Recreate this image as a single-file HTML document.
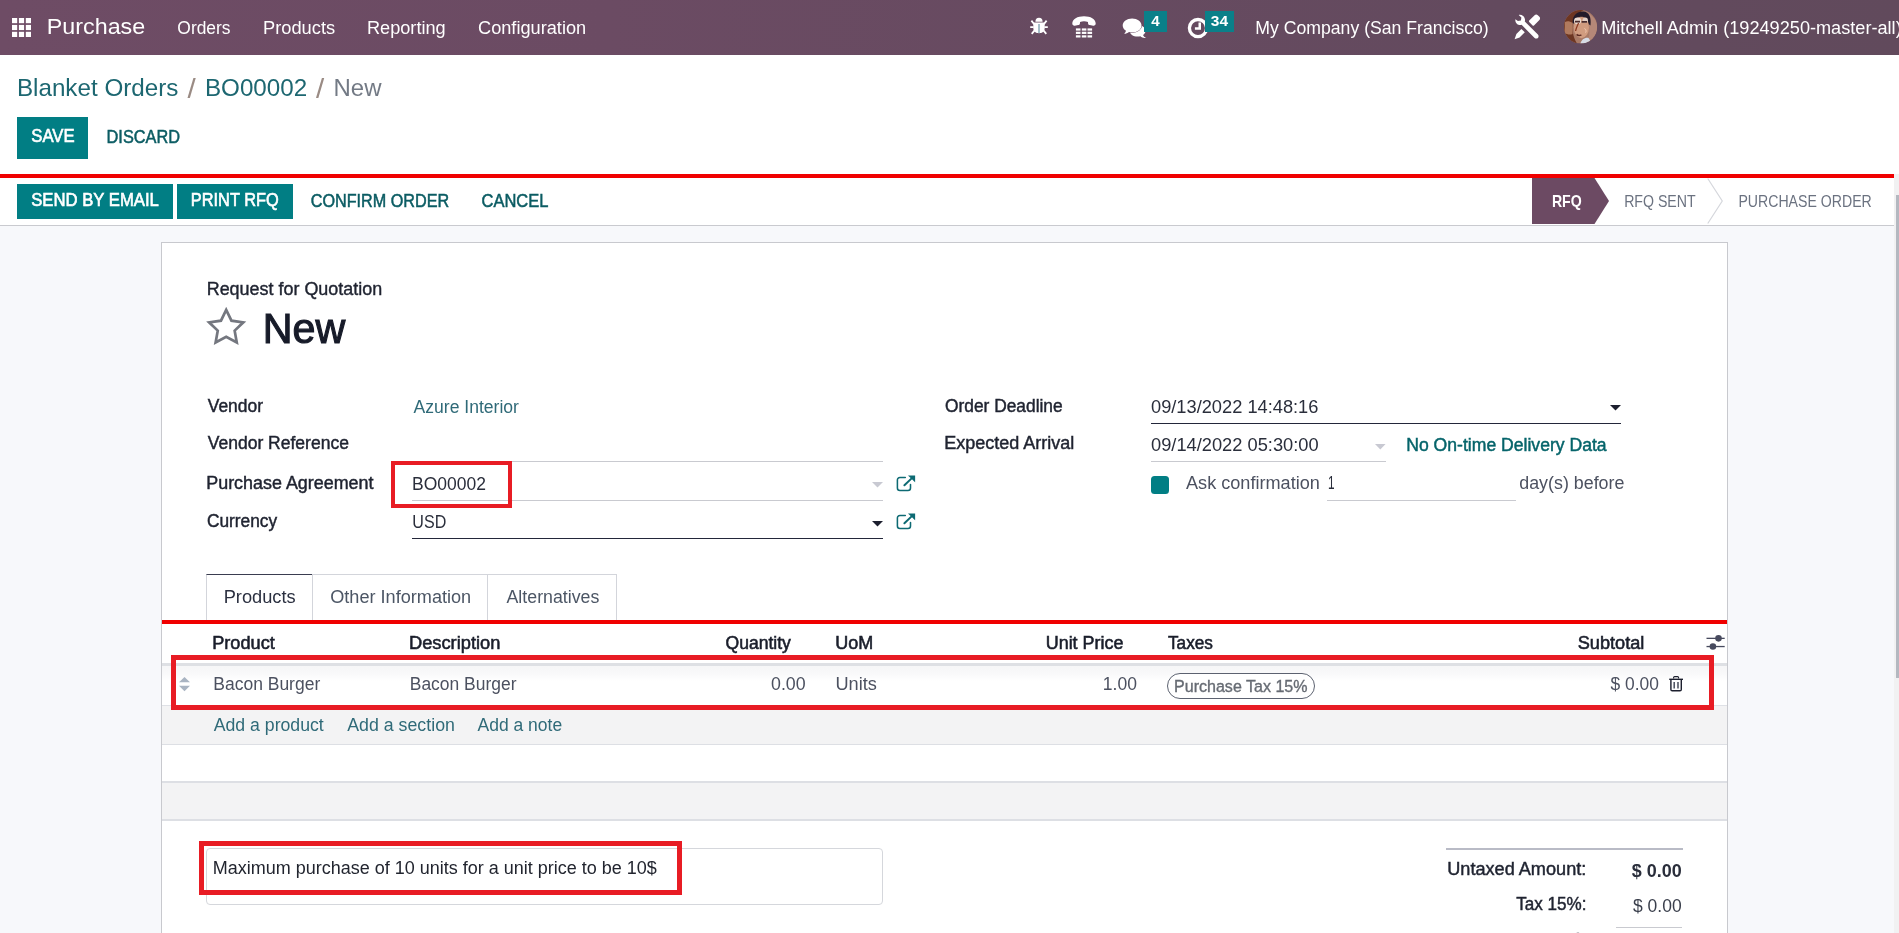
<!DOCTYPE html><html lang="en"><head><meta charset="utf-8"><title>Odoo - New Request for Quotation</title><style>
*{box-sizing:border-box;margin:0;padding:0}
html,body{width:1899px;height:933px;overflow:hidden;background:#f7f8fb}
body{position:relative;font-family:"Liberation Sans",sans-serif;font-size:17.5px;color:#1f2330}
.t{position:absolute;white-space:nowrap;transform-origin:0 50%;display:block;margin:0;padding:0;border:0;background:none;font-family:inherit;font-weight:400;text-decoration:none;text-align:left;letter-spacing:0;appearance:none;-webkit-appearance:none;cursor:default}
.a{position:absolute;display:block}
.sec{position:static;display:block}
.layer{position:absolute;left:0;top:0;width:1899px;height:933px;will-change:transform;overflow:hidden}
svg{position:absolute;overflow:visible}
#nav{position:absolute;left:0;top:0;width:1899px;height:54.5px;background:linear-gradient(90deg,#6e4c65 0%,#6b4b63 32%,#634a5e 79%,#614a5c 100%);overflow:hidden}
#cp{position:absolute;left:0;top:54.5px;width:1899px;height:119.5px;background:#fff}
#sb{position:absolute;left:0;top:174px;width:1894px;height:52px;background:#fff;border-bottom:1px solid #c9cacf}
#sheet{position:absolute;left:161px;top:242px;width:1567px;height:720px;background:#fff;border:1px solid #c8c9ce}
.btn{position:absolute;background:#017e84}
.ln{position:absolute;height:1px;background:#c9cad0}
.lnd{position:absolute;height:1.4px;background:#23273a}
.red{position:absolute;border:5px solid #e81c24}
.badge{position:absolute;background:#0a8089}
</style></head><body>
<nav class="sec" aria-label="Main navigation">
<div id="nav"></div>
<svg style="left:12px;top:18px" width="19" height="19" viewBox="0 0 19 19" fill="#fff"><rect x="0.00" y="0.00" width="5.2" height="5.2"/><rect x="6.90" y="0.00" width="5.2" height="5.2"/><rect x="13.80" y="0.00" width="5.2" height="5.2"/><rect x="0.00" y="6.90" width="5.2" height="5.2"/><rect x="6.90" y="6.90" width="5.2" height="5.2"/><rect x="13.80" y="6.90" width="5.2" height="5.2"/><rect x="0.00" y="13.80" width="5.2" height="5.2"/><rect x="6.90" y="13.80" width="5.2" height="5.2"/><rect x="13.80" y="13.80" width="5.2" height="5.2"/></svg>
<svg style="left:1029.5px;top:17px" width="18" height="17.5" viewBox="0 0 18 17.5" fill="none" stroke="#fff" stroke-width="1.8" stroke-linecap="butt">
<path d="M5.4 4.7 A3.6 3.9 0 0 1 12.6 4.7 Z" fill="#fff" stroke="none"/>
<path d="M3.3 5.4 H14.7 V11 C14.7 14.5 12 16.2 9 16.2 C6 16.2 3.3 14.5 3.3 11 Z" fill="#fff" stroke="none"/>
<path d="M4.2 7.2 L1.4 3.6 M13.8 7.2 L16.6 3.6 M3.6 10.2 H0.2 M14.4 10.2 H17.8 M4.6 13.4 L1.7 16.8 M13.4 13.4 L16.3 16.8"/>
<path d="M9 7 V16" stroke="#4f7f92" stroke-width="1"/>
</svg>
<svg style="left:1072px;top:15.5px" width="24" height="22" viewBox="0 0 24 22" fill="#fff"><path d="M0.3 7.5 C0.3 3 5.5 0.2 12 0.2 C18.5 0.2 23.7 3 23.7 7.5 C23.7 9 22.6 9.9 21.2 9.7 L17.8 9.1 C16.6 8.9 16 8 16 6.9 L16 6 C13.5 4.9 10.5 4.9 8 6 L8 6.9 C8 8 7.4 8.9 6.2 9.1 L2.8 9.7 C1.4 9.9 0.3 9 0.3 7.5 Z"/><rect x="3.9" y="12.4" width="4.6" height="2.2"/><rect x="9.8" y="12.4" width="4.6" height="2.2"/><rect x="15.5" y="12.4" width="4.6" height="2.2"/><rect x="3.9" y="15.75" width="4.6" height="2.2"/><rect x="9.8" y="15.75" width="4.6" height="2.2"/><rect x="15.5" y="15.75" width="4.6" height="2.2"/><rect x="3.9" y="19.3" width="4.6" height="2.2"/><rect x="9.8" y="19.3" width="4.6" height="2.2"/><rect x="15.5" y="19.3" width="4.6" height="2.2"/></svg>
<svg style="left:1122px;top:18px" width="25" height="21" viewBox="0 0 25 21">
<path d="M15.6 6.9 C20 6.9 23.6 9.5 23.6 12.7 C23.6 14.4 22.6 15.9 21 17 C21.5 18.2 22.6 19.3 24 19.9 C21.8 20.3 19.8 19.6 18.4 18.3 C17.5 18.5 16.6 18.6 15.6 18.6 C11.2 18.6 7.6 16 7.6 12.7 C7.6 9.5 11.2 6.9 15.6 6.9 Z" fill="#fff"/>
<path d="M10.1 0.4 C15.3 0.4 19.5 3.5 19.5 7.4 C19.5 11.3 15.3 14.4 10.1 14.4 C9 14.4 8 14.3 7 14 C5.6 15.2 4 15.8 2.2 15.8 C3.2 14.9 3.8 13.8 4 12.7 C1.9 11.4 0.7 9.5 0.7 7.4 C0.7 3.5 4.9 0.4 10.1 0.4 Z" fill="#fff" stroke="#694a61" stroke-width="1.1" paint-order="stroke"/>
</svg>
<div class="badge" style="left:1143.9px;top:10.6px;width:22.9px;height:21.2px"></div>
<svg style="left:1187px;top:16.5px" width="22" height="22" viewBox="0 0 22 22" fill="none" stroke="#fff">
<circle cx="11" cy="11.1" r="8.6" stroke-width="3.3"/>
<path d="M12.75 5.6 V11.6 H7.9" stroke-width="2.5"/>
</svg>
<div class="badge" style="left:1205.4px;top:10.6px;width:28.4px;height:21.2px"></div>
<svg style="left:1513.5px;top:14px" width="26.5" height="25.5" viewBox="0 0 26.5 25.5" fill="#fff">
<!-- wrench -->
<path d="M1.4 5.2 C0.9 7.9 2.6 10.4 5.3 10.9 C6.1 11.1 6.9 11 7.6 10.8 L20.6 23.9 C21.5 24.8 23 24.8 23.9 23.9 C24.8 23 24.8 21.5 23.9 20.6 L10.8 7.6 C11.4 5.6 10.8 3.3 9.1 1.9 C7.8 0.8 6.2 0.5 4.7 0.9 L7.4 3.6 L6.9 6.6 L3.9 7.1 L1.4 5.2 Z"/>
<!-- screwdriver handle -->
<path d="M15.2 6.6 L20.6 1.2 C21.5 0.3 22.9 0.3 23.8 1.2 L25.4 2.8 C26.3 3.7 26.3 5.1 25.4 6 L20 11.4 C19.6 11.8 19 11.8 18.6 11.4 L15.2 8 C14.8 7.6 14.8 7 15.2 6.6 Z"/>
<!-- screwdriver blade -->
<path d="M7.4 14.9 L10.8 18.3 L5.6 23.4 L0.6 25.2 L2.4 20.1 Z"/>
</svg>
<svg style="left:1563.8px;top:10.4px" width="33.2" height="33.6" viewBox="0 0 33.2 33.6">
<defs><clipPath id="av"><ellipse cx="16.6" cy="16.8" rx="16.6" ry="16.8"/></clipPath></defs>
<g clip-path="url(#av)">
<rect width="33.2" height="33.6" fill="#a97a66"/>
<path d="M0 0 H20 C14 3 9 8 8.5 14 C8 20 9 27 13 33.6 H0 Z" fill="#6d3622"/>
<path d="M1 12 C3 10.5 6 11 8.5 13 L8.6 24 C6 25 3 24.5 0.5 23 Z" fill="#b07a5e"/>
<path d="M22 2 C28 5 33.2 10 33.2 17 C33.2 25 29 30 24 32 C26 26 26.5 12 22 2 Z" fill="#b58878"/>
<path d="M8.6 12.5 C8.5 4.5 14 1.2 19.5 1.6 C25 2 27.5 7 26.5 15.5 L24.6 14 C24 8.5 20 6.2 15.5 7 C12 7.7 10.3 10 10 14 Z" fill="#231b29"/>
<ellipse cx="17.4" cy="17.6" rx="7.6" ry="10.6" fill="#d19c7f"/>
<ellipse cx="13.6" cy="10.8" rx="3.6" ry="3.4" fill="#eadbd1"/>
<ellipse cx="21.3" cy="10.2" rx="2.6" ry="2.6" fill="#e3cfc4"/>
<path d="M11 11.6 H16 M17.6 11.8 H23" stroke="#4a2b2b" stroke-width="1.7"/>
<path d="M14.6 13 C13.4 15.5 12 18.5 11.6 21" stroke="#8b3a22" stroke-width="1.3" fill="none"/>
<path d="M12.6 24.4 C14 25.6 16 25.6 17.4 24.8" stroke="#5b2a22" stroke-width="1.5" fill="none"/>
<path d="M20.4 18.4 C22 19.2 22.6 21 21.6 22.6" stroke="#f0c8b0" stroke-width="1" fill="none"/>
<path d="M16.4 33.6 C17.4 29.6 20.6 27.2 24.4 27.8 C26 29.6 26.4 31.6 26 33.6 Z" fill="#d7dce6"/>
</g></svg>
<div class="layer"><a href="#" class="t" style="left:46px;top:16px;font-size:22.5px;line-height:22.5px;color:#ffffff;transform:translate(0.82px,0.20px) scaleX(1.0348);">Purchase</a>
<a href="#" class="t" style="left:177px;top:19px;font-size:17.5px;line-height:17.5px;color:#ffffff;transform:translate(0.35px,0.79px) scaleX(0.9938);">Orders</a>
<a href="#" class="t" style="left:262px;top:19px;font-size:17.5px;line-height:17.5px;color:#ffffff;transform:translate(0.95px,0.79px) scaleX(1.0452);">Products</a>
<a href="#" class="t" style="left:366px;top:19px;font-size:17.5px;line-height:17.5px;color:#ffffff;transform:translate(0.96px,0.79px) scaleX(1.0371);">Reporting</a>
<a href="#" class="t" style="left:478px;top:19px;font-size:17.5px;line-height:17.5px;color:#ffffff;transform:translate(0.00px,0.79px) scaleX(1.0391);">Configuration</a>
<span class="t" style="left:1151px;top:13px;font-size:14px;line-height:14px;color:#ffffff;transform:translate(0.20px,0.95px) scaleX(1.0813);font-weight:700;">4</span>
<span class="t" style="left:1210px;top:13px;font-size:14px;line-height:14px;color:#ffffff;transform:translate(0.85px,0.95px) scaleX(1.1086);font-weight:700;">34</span>
<span class="t" style="left:1255px;top:19px;font-size:17.5px;line-height:17.5px;color:#ffffff;transform:translate(0.24px,0.79px) scaleX(1.0088);">My Company (San Francisco)</span>
<span class="t" style="left:1601px;top:19px;font-size:17.5px;line-height:17.5px;color:#ffffff;transform:translate(0.21px,0.79px) scaleX(1.0367);">Mitchell Admin (19249250-master-all)</span></div>
</nav>
<header class="sec" aria-label="Control panel">
<div id="cp"></div>
<div class="btn" style="left:17px;top:117px;width:71px;height:41.5px"></div>
<div class="layer"><a href="#" class="t" style="left:16px;top:76px;font-size:24.2px;line-height:24.2px;color:#1d6771;transform:translate(0.90px,0.06px) scaleX(1.0011);">Blanket Orders</a>
<span class="t" style="left:187px;top:75px;font-size:27.5px;line-height:27.5px;color:#9a8b84;transform:translate(0.55px,0.12px) scaleX(1.0750);">/</span>
<a href="#" class="t" style="left:204px;top:76px;font-size:24.2px;line-height:24.2px;color:#1d6771;transform:translate(0.95px,0.06px) scaleX(1.0005);">BO00002</a>
<span class="t" style="left:316px;top:75px;font-size:27.5px;line-height:27.5px;color:#9a8b84;transform:translate(0.05px,0.12px) scaleX(1.0750);">/</span>
<span class="t" style="left:333px;top:76px;font-size:24.2px;line-height:24.2px;color:#737a85;transform:translate(0.51px,0.06px) scaleX(0.9902);">New</span>
<button type="button" class="t" style="left:31px;top:128px;font-size:17.5px;line-height:17.5px;color:#ffffff;transform:translate(0.25px,0.29px) scaleX(0.9537);-webkit-text-stroke:0.6px #ffffff;">SAVE</button>
<button type="button" class="t" style="left:106px;top:128px;font-size:17.5px;line-height:17.5px;color:#0b5c63;transform:translate(0.57px,0.69px) scaleX(0.9323);-webkit-text-stroke:0.5px #0b5c63;">DISCARD</button></div>
</header>
<section class="sec" aria-label="Status bar">
<div id="sb"></div>
<div class="btn" style="left:17px;top:184.3px;width:155.7px;height:34.5px"></div>
<div class="btn" style="left:177px;top:184.3px;width:115.8px;height:34.5px"></div>
<svg style="left:1532px;top:178px" width="362" height="46" viewBox="0 0 362 46">
<path d="M0 0 H62.5 L77 23 L62.5 46 H0 Z" fill="#6c4a63"/>
<path d="M175.75 0.5 L190.25 23 L175.75 45.5" fill="none" stroke="#d5d7dc" stroke-width="1.2"/>
</svg>
<div class="layer"><button type="button" class="t" style="left:31px;top:192px;font-size:17.5px;line-height:17.5px;color:#ffffff;transform:translate(0.25px,0.49px) scaleX(0.9530);-webkit-text-stroke:0.6px #ffffff;">SEND BY EMAIL</button>
<button type="button" class="t" style="left:190px;top:192px;font-size:17.5px;line-height:17.5px;color:#ffffff;transform:translate(0.82px,0.49px) scaleX(0.9348);-webkit-text-stroke:0.6px #ffffff;">PRINT RFQ</button>
<button type="button" class="t" style="left:310px;top:192px;font-size:17.5px;line-height:17.5px;color:#0b5c63;transform:translate(0.75px,0.89px) scaleX(0.9250);-webkit-text-stroke:0.5px #0b5c63;">CONFIRM ORDER</button>
<button type="button" class="t" style="left:481px;top:192px;font-size:17.5px;line-height:17.5px;color:#0b5c63;transform:translate(0.50px,0.89px) scaleX(0.9423);-webkit-text-stroke:0.5px #0b5c63;">CANCEL</button>
<button type="button" class="t" style="left:1551px;top:192px;font-size:16.4px;line-height:16.4px;color:#ffffff;transform:translate(0.89px,0.72px) scaleX(0.8612);font-weight:700;">RFQ</button>
<button type="button" class="t" style="left:1624px;top:192px;font-size:16.4px;line-height:16.4px;color:#6b7280;transform:translate(0.14px,0.72px) scaleX(0.8631);">RFQ SENT</button>
<button type="button" class="t" style="left:1738px;top:192px;font-size:16.4px;line-height:16.4px;color:#6b7280;transform:translate(0.39px,0.72px) scaleX(0.8614);">PURCHASE ORDER</button></div>
</section>
<main class="sec" aria-label="Form sheet">
<div id="sheet"></div>
<svg style="left:0;top:0" width="1" height="1"><polygon points="226.20,309.90 231.43,320.70 243.32,322.34 234.66,330.65 236.78,342.46 226.20,336.80 215.62,342.46 217.74,330.65 209.08,322.34 220.97,320.70" fill="none" stroke="#74777f" stroke-width="2.7" stroke-linejoin="miter"/></svg>
<div class="ln" style="left:412px;top:461px;width:471px"></div>
<div class="ln" style="left:412px;top:500px;width:471px"></div>
<div class="lnd" style="left:412px;top:537.6px;width:471px"></div>
<div class="lnd" style="left:1151px;top:423px;width:470px"></div>
<div class="ln" style="left:1151px;top:461px;width:234.5px"></div>
<div class="ln" style="left:1327px;top:500px;width:188.5px"></div>
<svg style="left:872px;top:481.7px" width="11" height="5.6" viewBox="0 0 11 5.6"><path d="M0 0 H11 L5.5 5.6 Z" fill="#c8c9d2"/></svg>
<svg style="left:872px;top:520.9px" width="11" height="5.6" viewBox="0 0 11 5.6"><path d="M0 0 H11 L5.5 5.6 Z" fill="#1c1f2e"/></svg>
<svg style="left:1375px;top:444px" width="10.6" height="5.4" viewBox="0 0 10.6 5.4"><path d="M0 0 H10.6 L5.3 5.4 Z" fill="#c8c9d2"/></svg>
<svg style="left:1609.9px;top:404.5px" width="11" height="5.6" viewBox="0 0 11 5.6"><path d="M0 0 H11 L5.5 5.6 Z" fill="#1c1f2e"/></svg>
<svg style="left:895.8px;top:475.2px" width="19.5" height="16.5" viewBox="0 0 19.5 16.5" fill="none" stroke="#0d6a73" stroke-width="1.55">
<path d="M9.3 2.5 H3.9 C2.4 2.5 1.4 3.5 1.4 5 V13 C1.4 14.5 2.4 15.5 3.9 15.5 H12 C13.5 15.5 14.5 14.5 14.5 13 V9.6" stroke-linecap="round"/>
<path d="M8.4 10.2 L16.4 2.6" stroke-width="2" stroke-linecap="round"/>
<path d="M12 0.4 H19.1 V7.2 Z" fill="#0d6a73" stroke="none"/>
</svg>
<svg style="left:895.8px;top:513.4px" width="19.5" height="16.5" viewBox="0 0 19.5 16.5" fill="none" stroke="#0d6a73" stroke-width="1.55">
<path d="M9.3 2.5 H3.9 C2.4 2.5 1.4 3.5 1.4 5 V13 C1.4 14.5 2.4 15.5 3.9 15.5 H12 C13.5 15.5 14.5 14.5 14.5 13 V9.6" stroke-linecap="round"/>
<path d="M8.4 10.2 L16.4 2.6" stroke-width="2" stroke-linecap="round"/>
<path d="M12 0.4 H19.1 V7.2 Z" fill="#0d6a73" stroke="none"/>
</svg>
<div class="a" style="left:1151.2px;top:476.2px;width:17.6px;height:17.6px;border-radius:3.5px;background:#017e84"></div>
<div class="a" style="left:206px;top:574px;width:107px;height:47px;border:1px solid #d3d5db;border-top-color:#3a3d50;border-bottom:none;background:#fff"></div>
<div class="a" style="left:312px;top:574px;width:176px;height:47px;border:1px solid #d3d5db;border-left:none;border-bottom:none"></div>
<div class="a" style="left:487px;top:574px;width:130px;height:47px;border:1px solid #d3d5db;border-left:none;border-bottom:none"></div>
<div class="a" style="left:162px;top:663px;width:1565px;height:2.9px;background:#dee0e4"></div>
<div class="a" style="left:162px;top:665.9px;width:1565px;height:15px;background:linear-gradient(180deg,#f6f6f7 0%,#f9f9fa 50%,#ffffff 100%)"></div>
<div class="a" style="left:162px;top:705px;width:1565px;height:1px;background:#dfe1e6"></div>
<div class="a" style="left:162px;top:706px;width:1565px;height:38px;background:#f3f3f4"></div>
<div class="a" style="left:162px;top:743.5px;width:1565px;height:1.5px;background:#dddfe4"></div>
<div class="a" style="left:162px;top:781px;width:1565px;height:1.5px;background:#dddfe4"></div>
<div class="a" style="left:162px;top:782.5px;width:1565px;height:37px;background:#f3f3f4"></div>
<div class="a" style="left:162px;top:819px;width:1565px;height:1.5px;background:#dddfe4"></div>
<svg style="left:179px;top:676.5px" width="11" height="14.2" viewBox="0 0 11 14.2" fill="#a9b4c2">
<path d="M0 5.3 L5.5 0 L11 5.3 Z"/><path d="M0 8.7 H11 L5.5 14.2 Z"/></svg>
<div class="a" style="left:1167px;top:673px;width:147.5px;height:25.8px;border:1.2px solid #5c6270;border-radius:13px;background:#fff"></div>
<svg style="left:1706px;top:634px" width="19" height="17" viewBox="0 0 19 17" fill="#474a5e">
<rect x="0.5" y="3.7" width="18.2" height="1.3"/><circle cx="12.5" cy="4.35" r="3.3"/>
<rect x="0.5" y="11.9" width="18.2" height="1.3"/><circle cx="6.9" cy="12.55" r="3.3"/></svg>
<svg style="left:1668.5px;top:675.8px" width="14.2" height="15.4" viewBox="0 0 14.2 15.4" fill="none" stroke="#1c1f2e">
<path d="M4.6 2.6 V1.6 C4.6 1 5 0.6 5.6 0.6 H8.6 C9.2 0.6 9.6 1 9.6 1.6 V2.6" stroke-width="1.1"/>
<path d="M0.2 3.3 H14" stroke-width="1.4"/>
<path d="M1.9 4 V13.4 C1.9 14.2 2.4 14.7 3.2 14.7 H11 C11.8 14.7 12.3 14.2 12.3 13.4 V4" stroke-width="1.4"/>
<path d="M5.2 6 V12.4 M9 6 V12.4" stroke-width="1.5" stroke="#4a4f5e"/>
</svg>
<div class="a" style="left:206px;top:848px;width:677px;height:57px;border:1px solid #d5d7dc;border-radius:4px;background:#fff"></div>
<div class="a" style="left:1446px;top:848px;width:237px;height:1.6px;background:#b9bbc6"></div>
<div class="a" style="left:1616px;top:926.6px;width:66px;height:1px;background:#c9cad0"></div>
<div class="layer"><label class="t" style="left:206px;top:280px;font-size:17.5px;line-height:17.5px;color:#1f2330;transform:translate(0.68px,0.84px) scaleX(1.0249);-webkit-text-stroke:0.4px #1f2330;">Request for Quotation</label>
<h1 class="t" style="left:262px;top:307px;font-size:41.8px;line-height:41.8px;color:#171b29;transform:translate(0.84px,0.87px) scaleX(0.9867);-webkit-text-stroke:1.1px #171b29;">New</h1>
<label class="t" style="left:207px;top:397px;font-size:17.5px;line-height:17.5px;color:#1f2330;transform:translate(0.75px,0.94px) scaleX(0.9957);-webkit-text-stroke:0.45px #1f2330;">Vendor</label>
<a href="#" class="t" style="left:413px;top:398px;font-size:17.5px;line-height:17.5px;color:#2f6a78;transform:translate(0.50px,0.99px) scaleX(1.0041);">Azure Interior</a>
<label class="t" style="left:207px;top:435px;font-size:17.5px;line-height:17.5px;color:#1f2330;transform:translate(0.75px,0.44px) scaleX(1.0005);-webkit-text-stroke:0.45px #1f2330;">Vendor Reference</label>
<label class="t" style="left:206px;top:474px;font-size:17.5px;line-height:17.5px;color:#1f2330;transform:translate(0.23px,0.69px) scaleX(1.0236);-webkit-text-stroke:0.45px #1f2330;">Purchase Agreement</label>
<span class="t" style="left:412px;top:475px;font-size:17.5px;line-height:17.5px;color:#2a2e3b;transform:translate(0.00px,0.99px) scaleX(0.9991);">BO00002</span>
<label class="t" style="left:207px;top:512px;font-size:17.5px;line-height:17.5px;color:#1f2330;transform:translate(0.00px,0.69px) scaleX(0.9882);-webkit-text-stroke:0.45px #1f2330;">Currency</label>
<span class="t" style="left:412px;top:513px;font-size:17.5px;line-height:17.5px;color:#2a2e3b;transform:translate(0.33px,0.99px) scaleX(0.9176);">USD</span>
<label class="t" style="left:945px;top:397px;font-size:17.5px;line-height:17.5px;color:#1f2330;transform:translate(0.00px,0.94px) scaleX(0.9912);-webkit-text-stroke:0.45px #1f2330;">Order Deadline</label>
<label class="t" style="left:944px;top:435px;font-size:17.5px;line-height:17.5px;color:#1f2330;transform:translate(0.22px,0.44px) scaleX(1.0289);-webkit-text-stroke:0.45px #1f2330;">Expected Arrival</label>
<span class="t" style="left:1151px;top:398px;font-size:17.5px;line-height:17.5px;color:#2a2e3b;transform:translate(0.00px,0.99px) scaleX(1.0426);">09/13/2022 14:48:16</span>
<span class="t" style="left:1151px;top:436px;font-size:17.5px;line-height:17.5px;color:#2a2e3b;transform:translate(0.00px,0.99px) scaleX(1.0439);">09/14/2022 05:30:00</span>
<a href="#" class="t" style="left:1406px;top:436px;font-size:17.5px;line-height:17.5px;color:#05646a;transform:translate(0.24px,0.94px) scaleX(1.0051);-webkit-text-stroke:0.45px #05646a;">No On-time Delivery Data</a>
<label class="t" style="left:1186px;top:475px;font-size:17.5px;line-height:17.5px;color:#4c5160;transform:translate(0.00px,0.49px) scaleX(1.0352);">Ask confirmation</label>
<span class="t" style="left:1328px;top:475px;font-size:17.5px;line-height:17.5px;color:#2a2e3b;transform:translate(0.08px,0.49px) scaleX(0.6750);">1</span>
<span class="t" style="left:1519px;top:475px;font-size:17.5px;line-height:17.5px;color:#4c5160;transform:translate(0.25px,0.49px) scaleX(1.0198);">day(s) before</span>
<a href="#" class="t" style="left:223px;top:588px;font-size:17.5px;line-height:17.5px;color:#2b3040;transform:translate(0.71px,0.99px) scaleX(1.0416);">Products</a>
<a href="#" class="t" style="left:330px;top:588px;font-size:17.5px;line-height:17.5px;color:#4c5665;transform:translate(0.25px,0.99px) scaleX(1.0348);">Other Information</a>
<a href="#" class="t" style="left:506px;top:588px;font-size:17.5px;line-height:17.5px;color:#4c5665;transform:translate(0.50px,0.99px) scaleX(1.0160);">Alternatives</a>
<span class="t" style="left:212px;top:634px;font-size:17.5px;line-height:17.5px;color:#1a1e2b;transform:translate(0.21px,0.79px) scaleX(1.0370);-webkit-text-stroke:0.55px #1a1e2b;">Product</span>
<span class="t" style="left:408px;top:634px;font-size:17.5px;line-height:17.5px;color:#1a1e2b;transform:translate(0.96px,0.79px) scaleX(1.0449);-webkit-text-stroke:0.55px #1a1e2b;">Description</span>
<span class="t" style="left:725px;top:634px;font-size:17.5px;line-height:17.5px;color:#1a1e2b;transform:translate(0.50px,0.79px) scaleX(1.0035);-webkit-text-stroke:0.55px #1a1e2b;">Quantity</span>
<span class="t" style="left:835px;top:634px;font-size:17.5px;line-height:17.5px;color:#1a1e2b;transform:translate(0.22px,0.79px) scaleX(1.0291);-webkit-text-stroke:0.55px #1a1e2b;">UoM</span>
<span class="t" style="left:1045px;top:634px;font-size:17.5px;line-height:17.5px;color:#1a1e2b;transform:translate(0.73px,0.79px) scaleX(1.0240);-webkit-text-stroke:0.55px #1a1e2b;">Unit Price</span>
<span class="t" style="left:1168px;top:634px;font-size:17.5px;line-height:17.5px;color:#1a1e2b;transform:translate(0.00px,0.79px) scaleX(0.9823);-webkit-text-stroke:0.55px #1a1e2b;">Taxes</span>
<span class="t" style="left:1577px;top:634px;font-size:17.5px;line-height:17.5px;color:#1a1e2b;transform:translate(0.75px,0.79px) scaleX(1.0367);-webkit-text-stroke:0.55px #1a1e2b;">Subtotal</span>
<span class="t" style="left:213px;top:675px;font-size:17.5px;line-height:17.5px;color:#4c5160;transform:translate(0.25px,0.99px) scaleX(0.9997);">Bacon Burger</span>
<span class="t" style="left:409px;top:675px;font-size:17.5px;line-height:17.5px;color:#4c5160;transform:translate(0.75px,0.99px) scaleX(0.9974);">Bacon Burger</span>
<span class="t" style="left:771px;top:675px;font-size:17.5px;line-height:17.5px;color:#4c5160;transform:translate(0.00px,0.99px) scaleX(1.0167);">0.00</span>
<span class="t" style="left:835px;top:675px;font-size:17.5px;line-height:17.5px;color:#4c5160;transform:translate(0.46px,0.99px) scaleX(1.0391);">Units</span>
<span class="t" style="left:1102px;top:675px;font-size:17.5px;line-height:17.5px;color:#4c5160;transform:translate(0.75px,0.99px) scaleX(1.0022);">1.00</span>
<span class="t" style="left:1174px;top:678px;font-size:16.3px;line-height:16.3px;color:#666b73;transform:translate(0.01px,0.30px) scaleX(0.9857);-webkit-text-stroke:0.35px #666b73;">Purchase Tax 15%</span>
<span class="t" style="left:1610px;top:675px;font-size:17.5px;line-height:17.5px;color:#4c5160;transform:translate(0.50px,0.99px) scaleX(0.9944);">$ 0.00</span>
<a href="#" class="t" style="left:213px;top:716px;font-size:17.5px;line-height:17.5px;color:#2f6a78;transform:translate(0.75px,0.74px) scaleX(1.0096);">Add a product</a>
<a href="#" class="t" style="left:347px;top:716px;font-size:17.5px;line-height:17.5px;color:#2f6a78;transform:translate(0.25px,0.74px) scaleX(1.0151);">Add a section</a>
<a href="#" class="t" style="left:477px;top:716px;font-size:17.5px;line-height:17.5px;color:#2f6a78;transform:translate(0.50px,0.74px) scaleX(0.9997);">Add a note</a>
<span class="t" style="left:212px;top:860px;font-size:17.5px;line-height:17.5px;color:#22252f;transform:translate(0.72px,0.24px) scaleX(1.0284);">Maximum purchase of 10 units for a unit price to be 10$</span>
<label class="t" style="left:1447px;top:861px;font-size:17.5px;line-height:17.5px;color:#1f2330;transform:translate(0.21px,0.44px) scaleX(1.0360);-webkit-text-stroke:0.45px #1f2330;">Untaxed Amount:</label>
<span class="t" style="left:1631px;top:863px;font-size:17.5px;line-height:17.5px;color:#2a2e3b;transform:translate(0.75px,0.24px) scaleX(1.0251);font-weight:700;">$ 0.00</span>
<label class="t" style="left:1516px;top:895px;font-size:17.5px;line-height:17.5px;color:#1f2330;transform:translate(0.25px,0.94px) scaleX(0.9758);-webkit-text-stroke:0.45px #1f2330;">Tax 15%:</label>
<span class="t" style="left:1633px;top:897px;font-size:17.5px;line-height:17.5px;color:#3a3f4c;transform:translate(0.00px,0.99px) scaleX(0.9995);">$ 0.00</span>
<label class="t" style="left:1534px;top:929px;font-size:22.75px;line-height:22.75px;color:#1f2330;transform:translate(0.50px,0.54px) scaleX(0.9537);-webkit-text-stroke:0.5px #1f2330;">Total:</label>
<span class="t" style="left:1621px;top:930px;font-size:22.75px;line-height:22.75px;color:#2a2e3b;transform:translate(0.00px,0.04px) scaleX(0.9561);font-weight:700;">$ 0.00</span></div>
</main>
<div class="a" style="left:0;top:173.7px;width:1894px;height:4.1px;background:#f00000"></div>
<div class="a" style="left:162px;top:619.5px;width:1565px;height:4.2px;background:#f00000"></div>
<div class="red" style="left:391.3px;top:461.2px;width:120.5px;height:46.8px;border-width:4.5px"></div>
<div class="red" style="left:171.2px;top:655px;width:1542.8px;height:55px"></div>
<div class="red" style="left:199.3px;top:841.2px;width:482.5px;height:54.3px"></div>
<div class="a" style="left:1894px;top:173.5px;width:5px;height:760px;background:#f1f1f2"></div>
<div class="a" style="left:1895.7px;top:195px;width:3.3px;height:482.5px;background:#b4b8c0"></div>
</body></html>
